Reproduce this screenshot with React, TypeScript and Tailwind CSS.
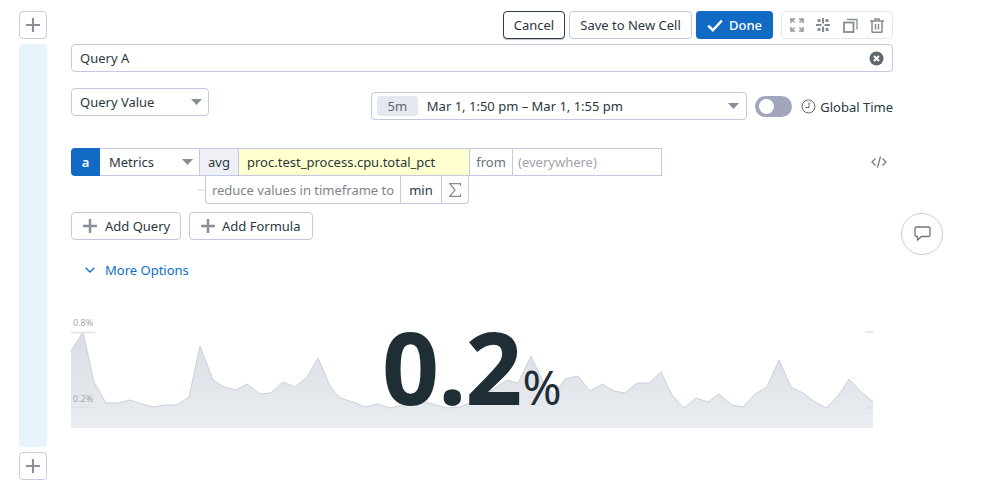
import React from "react";

const PTS: [number, number][] = [
  [71,351],[83,332],[94,382],[106,403],[118,403],[130,400],[142,404],[153,407],[165,405],[177,405],[189,397],[200,346],[213,380],[224,387],[236,390],[247,384],[260,394],[271,393],[283,382],[295,387],[307,377],[318,358],[331,388],[340,398],[353,402],[365,407],[377,404],[390,408],[402,405],[414,403],[425,402],[436,405],[447,408],[460,407],[471,402],[483,396],[495,388],[507,380],[518,383],[531,356],[543,382],[554,395],[565,379],[578,376],[590,391],[602,384],[614,391],[625,393],[637,383],[649,383],[661,372],[672,395],[684,408],[696,398],[708,402],[719,394],[732,405],[743,407],[755,394],[767,387],[779,360],[791,387],[803,393],[815,402],[826,408],[838,396],[849,379],[861,392],[873,402],
];
const OX = 71;
const OY = 310;
const line = PTS.map(([x, y]) => `${x - OX},${y - OY}`).join(" ");
const area = `0,118 ${line} 802,118`;

function Plus({ size = 16, color = "#8a9098", sw = 2 }: { size?: number; color?: string; sw?: number }) {
  return (
    <svg width={size} height={size} viewBox="0 0 16 16" fill="none" stroke={color} strokeWidth={sw}>
      <path d="M8 0v16M0 8h16" />
    </svg>
  );
}

function Caret({ color = "#868d96" }: { color?: string }) {
  return (
    <svg width="11" height="6" viewBox="0 0 11 6" fill={color}>
      <path d="M0 0h11L5.500 6z" />
    </svg>
  );
}

function AddBtn() {
  return (
    <button className="w-[28px] h-[28px] flex items-center justify-center rounded-[4px] border border-[#c7cce3] bg-white">
      <Plus size={14} sw={2.4} />
    </button>
  );
}

export default function App() {
  const border = "border-[#c3c9e0]";
  return (
    <div className="relative w-[995px] h-[485px] bg-white overflow-hidden flex pl-[19px] pt-[11px] text-[13px] text-[#2a3840] font-['Noto_Sans','Open_Sans',sans-serif]">
      <div className="w-[28px] flex flex-col shrink-0">
        <AddBtn />
        <div className="mt-[5px] h-[403px] rounded-[4px] bg-[#e8f4fc]" />
        <div className="mt-[5px]"><AddBtn /></div>
      </div>

      <div className="ml-[24px] w-[822px] flex flex-col">
        <div className="flex justify-end h-[28px]">
          <button className="w-[62px] h-[28px] pt-[2px] rounded-[4px] border border-[#2f3d47] shadow-[0_1px_1px_rgba(0,0,0,0.25)] bg-white">Cancel</button>
          <button className={`ml-[4px] w-[123px] h-[28px] pt-[2px] rounded-[4px] border ${border} bg-white`}>Save to New Cell</button>
          <button className="ml-[4px] w-[77px] h-[28px] rounded-[4px] bg-[#116bc5] text-white flex items-center justify-center gap-[6px] font-medium">
            <svg width="16" height="13" viewBox="0 0 16 13" fill="none" stroke="#fff" strokeWidth="2.4"><path d="M1.200 6.600l4.600 4.600L14.800 1.600" /></svg>
            <span className="pt-[2px]">Done</span>
          </button>
          <div className="ml-[8px] w-[112px] h-[28px] rounded-[4px] border border-[#e3e6f0] flex items-center justify-around px-[2px]">
            <svg width="14" height="14" viewBox="0 0 14 14" fill="none" stroke="#9298a0" strokeWidth="1.500">
              <path d="M1 5V1h4M1 1l3.500 3.500M9 1h4v4M13 1L9.500 4.500M1 9v4h4M1 13l3.500-3.500M9 13h4V9M13 13L9.500 9.500" />
            </svg>
            <svg width="14" height="14" viewBox="0 0 14 14" fill="none" stroke="#858c94" strokeWidth="2">
              <path d="M7 0v5.500M7 8.500v5.500M0 7h5.500M8.500 7h5.500" />
              <path d="M1.500 2.500h3M9.500 2.500h3M1.500 11.500h3M9.500 11.500h3" strokeWidth="3" />
            </svg>
            <svg width="15" height="15" viewBox="0 0 15 15" fill="none" stroke="#858c94" strokeWidth="1.800">
              <rect x="1" y="4.500" width="9.500" height="9.500" />
              <path d="M4 1.500h10v10" strokeWidth="1.300" />
            </svg>
            <svg width="14" height="15" viewBox="0 0 14 15" fill="none" stroke="#858c94" strokeWidth="1.500">
              <path d="M0 3h14M5 3V1h4v2M2 3v10.500a.8.8 0 0 0 .8.8h8.400a.8.8 0 0 0 .8-.8V3M5.500 6v5.500M8.500 6v5.500" />
            </svg>
          </div>
        </div>

        <div className={`mt-[5px] h-[28px] rounded-[4px] border ${border} flex items-center justify-between pl-[8px] pr-[8px]`}>
          <span className="pt-[2px]">Query A</span>
          <svg width="15" height="15" viewBox="0 0 15 15">
            <circle cx="7.500" cy="7.500" r="7" fill="#5f666d" />
            <path d="M5 5l5 5M10 5l-5 5" stroke="#fff" strokeWidth="2" />
          </svg>
        </div>

        <div className="flex items-start h-[32px] mt-[16px]">
          <div className={`w-[138px] h-[28px] rounded-[4px] border ${border} flex items-center justify-between pl-[8px] pr-[6px]`}>
            <span className="pt-[2px]">Query Value</span>
            <Caret />
          </div>
          <div className={`ml-[162px] mt-[4px] w-[377px] h-[28px] rounded-[4px] border ${border} flex items-center pl-[5px] pr-[7px]`}>
            <span className="w-[41px] h-[20px] pt-[2px] rounded-[3px] bg-[#e6e8f0] text-[#5d666e] flex items-center justify-center">5m</span>
            <span className="ml-[9px] pt-[2px] flex-1">Mar 1, 1:50 pm – Mar 1, 1:55 pm</span>
            <Caret />
          </div>
          <div className="ml-[8px] mt-[8px] w-[37px] h-[21px] rounded-full bg-[#a1a6bd] flex items-center pl-[4px]">
            <div className="w-[15px] h-[15px] rounded-full bg-white" />
          </div>
          <svg className="ml-[9px] mt-[11px]" width="15" height="15" viewBox="0 0 15 15" fill="none" stroke="#5f666d" strokeWidth="1">
            <circle cx="7.500" cy="7.500" r="6.500" />
            <path d="M8 3.500V8.500H4.500" />
          </svg>
          <span className="ml-[4px] mt-[10px] leading-[18px] whitespace-nowrap">Global Time</span>
        </div>

        <div className="mt-[28px] flex h-[28px] relative">
          <div className="w-[29px] pt-[2px] rounded-l-[4px] bg-[#116bc5] text-white font-semibold flex items-center justify-center">a</div>
          <div className={`w-[100px] border-y border-r ${border} flex items-center justify-between pl-[9px] pr-[6px]`}>
            <span className="pt-[2px]">Metrics</span>
            <Caret />
          </div>
          <div className={`w-[39px] pt-[2px] border-y border-r ${border} bg-[#eff0f5] flex items-center justify-center`}>avg</div>
          <div className={`w-[231px] pt-[2px] border-y border-r ${border} bg-[#ffffcf] flex items-center pl-[8px]`}>proc.test_process.cpu.total_pct</div>
          <div className={`w-[43px] pt-[2px] border-y border-r ${border} text-[#6a7279] flex items-center justify-center`}>from</div>
          <div className={`w-[149px] pt-[2px] border-y border-r ${border} text-[#a0a5ab] flex items-center pl-[5px]`}>(everywhere)</div>
          <svg className="absolute left-[800px] top-[8px]" width="16" height="12" viewBox="0 0 16 12" fill="none" stroke="#6e757c" strokeWidth="1.200">
            <path d="M4.500 2.500L1 6l3.500 3.500M11.500 2.500L15 6l-3.500 3.500M9.500 0.500L6.500 11.500" />
          </svg>
        </div>

        <div className="flex h-[28px] items-center">
          <div className="ml-[127px] w-[7px] h-[2px] bg-[#e6e8ee]" />
          <div className={`w-[264px] h-[28px] rounded-b-[4px] border-x border-b ${border} flex`}>
            <div className={`w-[195px] pt-[2px] border-r ${border} text-[#7d848b] flex items-center justify-center whitespace-nowrap`}>reduce values in timeframe to</div>
            <div className={`w-[41px] pt-[2px] border-r ${border} flex items-center justify-center`}>min</div>
            <div className="flex-1 flex items-center justify-center">
              <svg width="12" height="14" viewBox="0 0 12 14" fill="none" stroke="#868d96" strokeWidth="1.200">
                <path d="M11.500 3V.700H.800L6 7 .800 13.300H11.500V11" />
              </svg>
            </div>
          </div>
        </div>

        <div className="mt-[8px] flex gap-[8px]">
          <button className={`w-[110px] h-[28px] rounded-[4px] border ${border} flex items-center pl-[11px] gap-[8px]`}>
            <Plus size={14} sw={2.800} />
            <span className="pt-[2px]">Add Query</span>
          </button>
          <button className={`w-[124px] h-[28px] rounded-[4px] border ${border} flex items-center pl-[11px] gap-[7px]`}>
            <Plus size={14} sw={2.800} />
            <span className="pt-[2px]">Add Formula</span>
          </button>
        </div>

        <div className="mt-[20px] h-[20px] flex items-center text-[#0f6ecb] pl-[14px] gap-[10px]">
          <svg width="10" height="6" viewBox="0 0 10 6" fill="none" stroke="#0f6ecb" strokeWidth="1.300"><path d="M.7.700L5 5l4.300-4.300" /></svg>
          <span className="pt-[2px]">More Options</span>
        </div>

        <div className="relative mt-[30px] w-[802px] h-[118px]">
          <svg className="absolute inset-0" width="802" height="118" viewBox="0 0 802 118">
            <defs>
              <linearGradient id="fill" x1="0" y1="0" x2="0" y2="1">
                <stop offset="0" stopColor="#dadee5" />
                <stop offset="1" stopColor="#e9ecf0" />
              </linearGradient>
            </defs>
            <polygon points={area} fill="url(#fill)" />
            <polyline points={line} fill="none" stroke="#cbd0da" strokeWidth="1" />
            <path d="M0 22.500h24M0 97.500h24M794 22h8M794 98h8" stroke="#dfe1e5" strokeWidth="1.300" />
          </svg>
          <span className="absolute left-[2px] top-[7px] text-[9px] leading-[12px] text-[#a3a8ad]">0.8%</span>
          <span className="absolute left-[2px] top-[83px] text-[9px] leading-[12px] text-[#a3a8ad]">0.2%</span>
          <div className="absolute left-[311px] top-[1px] flex items-baseline text-[#1f2d35] whitespace-nowrap">
            <span className="text-[100px] leading-[110px] font-bold tracking-[-1px]">0.2</span>
            <span className="text-[47px] leading-[50px] font-[450] ml-[1px]">%</span>
          </div>
        </div>
      </div>

      <div className="absolute left-[901px] top-[213px] w-[42px] h-[42px] rounded-full border border-[#c7cce3] bg-white flex items-center justify-center">
        <svg width="17" height="16" viewBox="0 0 17 16" fill="none" stroke="#6e757c" strokeWidth="1.300">
          <path d="M2.500 1h12a1.500 1.500 0 0 1 1.500 1.500v6.500a1.500 1.500 0 0 1-1.500 1.500H7.500L3.500 14v-3.500h-1A1.500 1.500 0 0 1 1 9V2.500A1.500 1.500 0 0 1 2.500 1z" />
        </svg>
      </div>
    </div>
  );
}
